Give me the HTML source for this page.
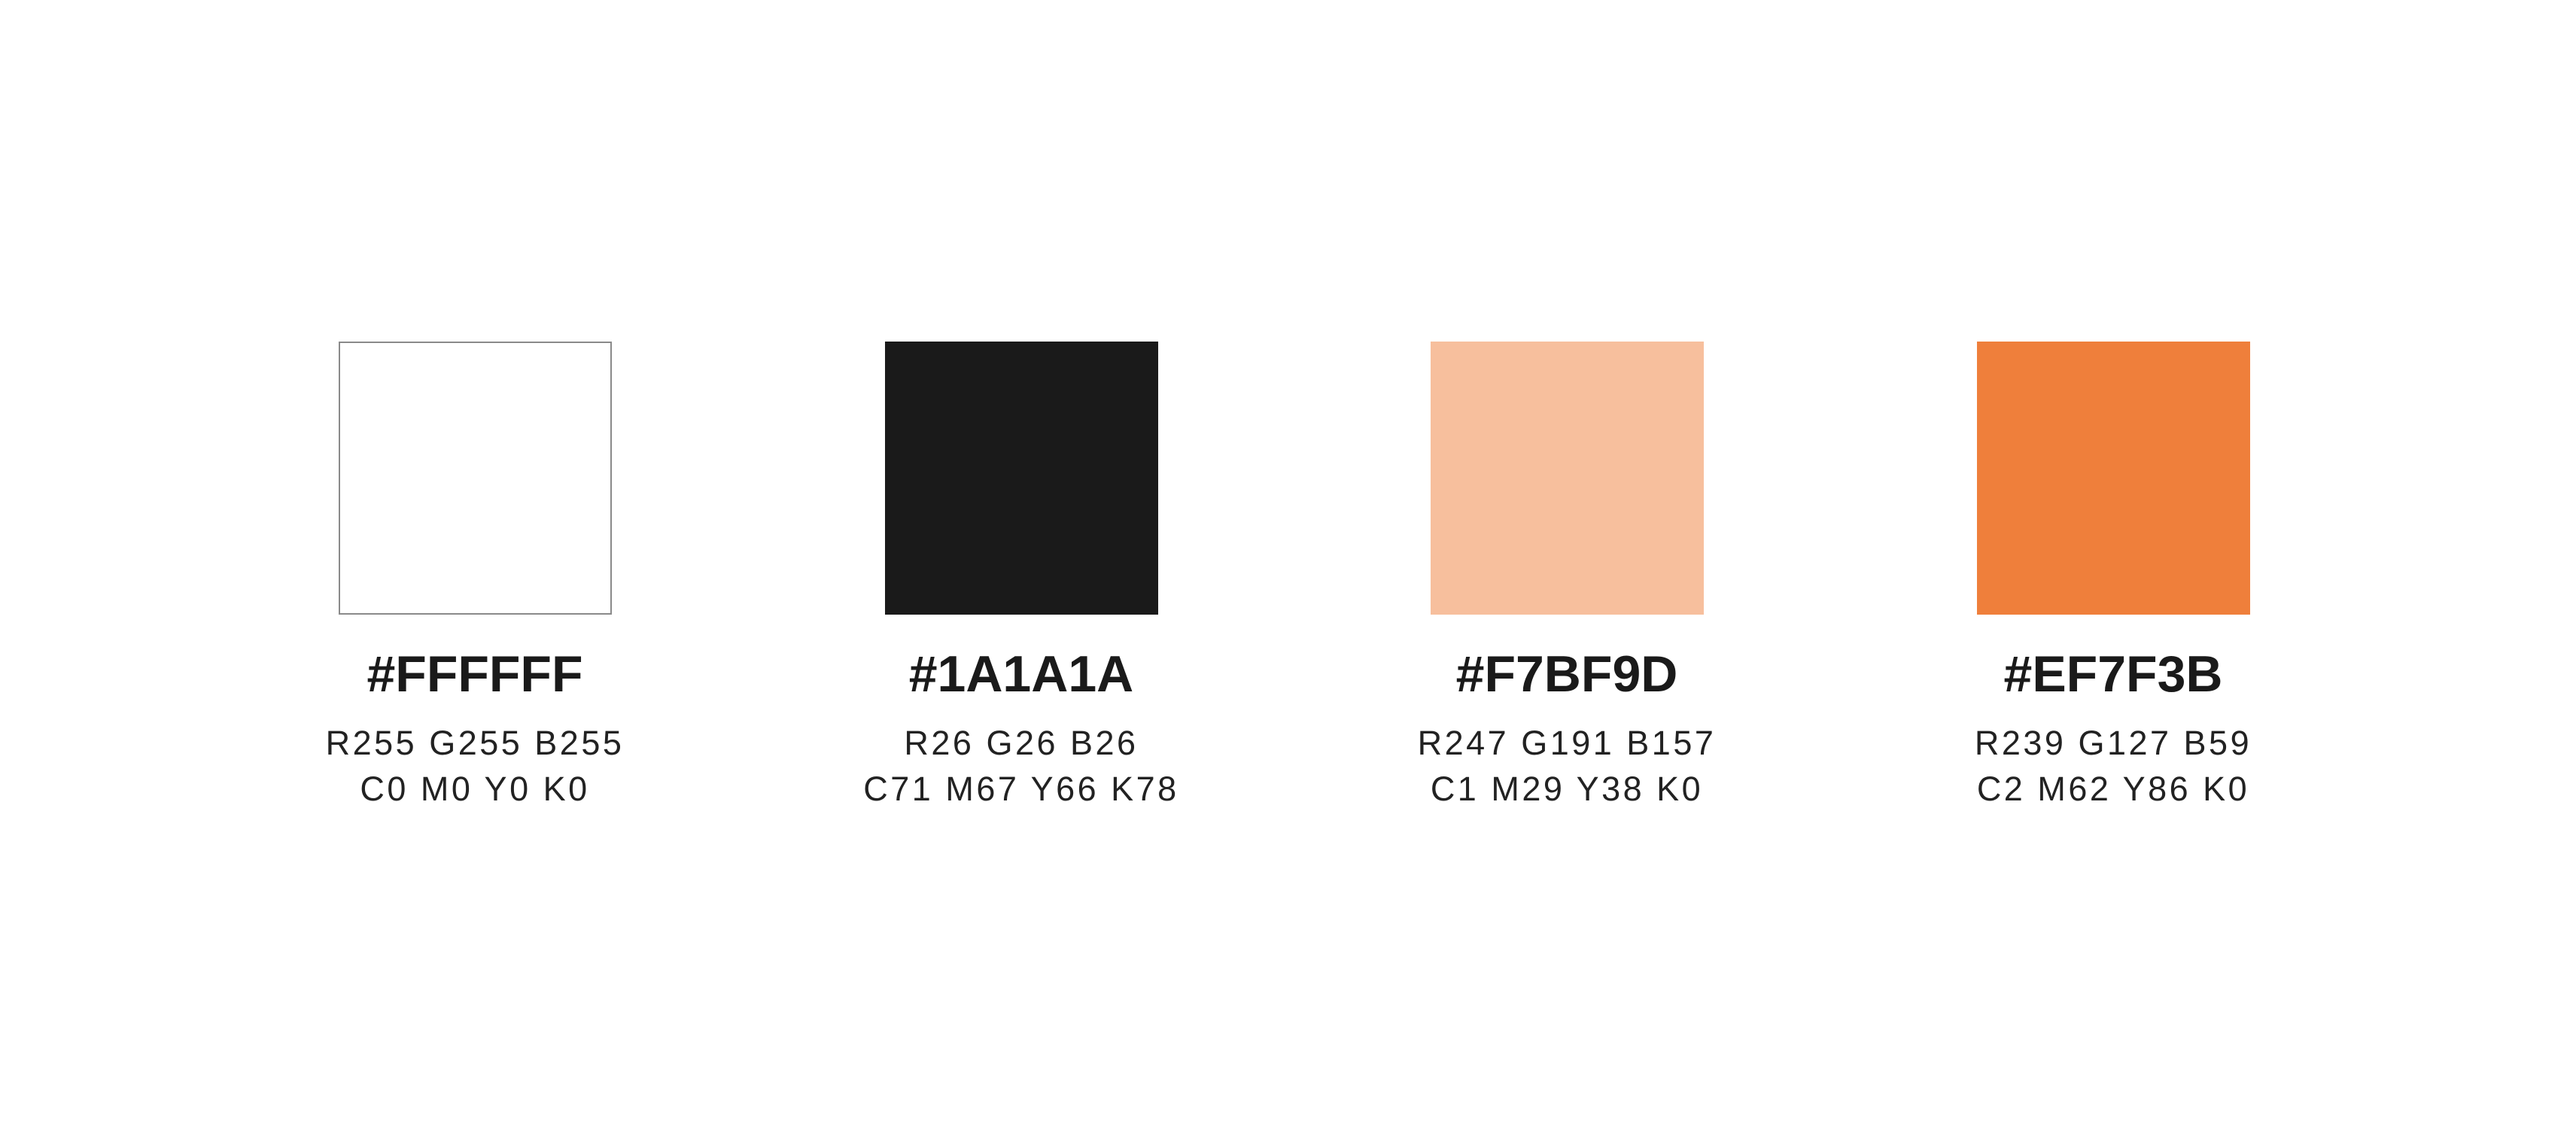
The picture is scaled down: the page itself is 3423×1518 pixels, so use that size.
<!DOCTYPE html>
<html><head><meta charset="utf-8"><style>
html,body{margin:0;padding:0;background:#fff;}
body{width:3423px;height:1518px;position:relative;overflow:hidden;font-family:"Liberation Sans",sans-serif;color:#1a1a1a;}
.sw{position:absolute;top:454px;width:363px;height:363px;box-sizing:border-box;}
.t{position:absolute;width:700px;text-align:center;}
.h{top:856px;font-size:68px;font-weight:bold;line-height:80px;}
.l1{top:960px;font-size:45px;line-height:56px;letter-spacing:3.5px;color:#222;}
.l2{top:1021px;font-size:45px;line-height:56px;letter-spacing:3.5px;color:#222;}
</style></head><body>
<div class="sw" style="left:450px;border:2px solid #8a8a8a;background:#fff"></div>
<div class="sw" style="left:1176px;background:#1a1a1a"></div>
<div class="sw" style="left:1901px;background:#f7bf9d"></div>
<div class="sw" style="left:2627px;background:#ef7f3b"></div>

<div class="t h" style="left:281px">#FFFFFF</div>
<div class="t l1" style="left:281px">R255 G255 B255</div>
<div class="t l2" style="left:281px">C0 M0 Y0 K0</div>

<div class="t h" style="left:1007px">#1A1A1A</div>
<div class="t l1" style="left:1007px">R26 G26 B26</div>
<div class="t l2" style="left:1007px">C71 M67 Y66 K78</div>

<div class="t h" style="left:1732px">#F7BF9D</div>
<div class="t l1" style="left:1732px">R247 G191 B157</div>
<div class="t l2" style="left:1732px">C1 M29 Y38 K0</div>

<div class="t h" style="left:2458px">#EF7F3B</div>
<div class="t l1" style="left:2458px">R239 G127 B59</div>
<div class="t l2" style="left:2458px">C2 M62 Y86 K0</div>
</body></html>
